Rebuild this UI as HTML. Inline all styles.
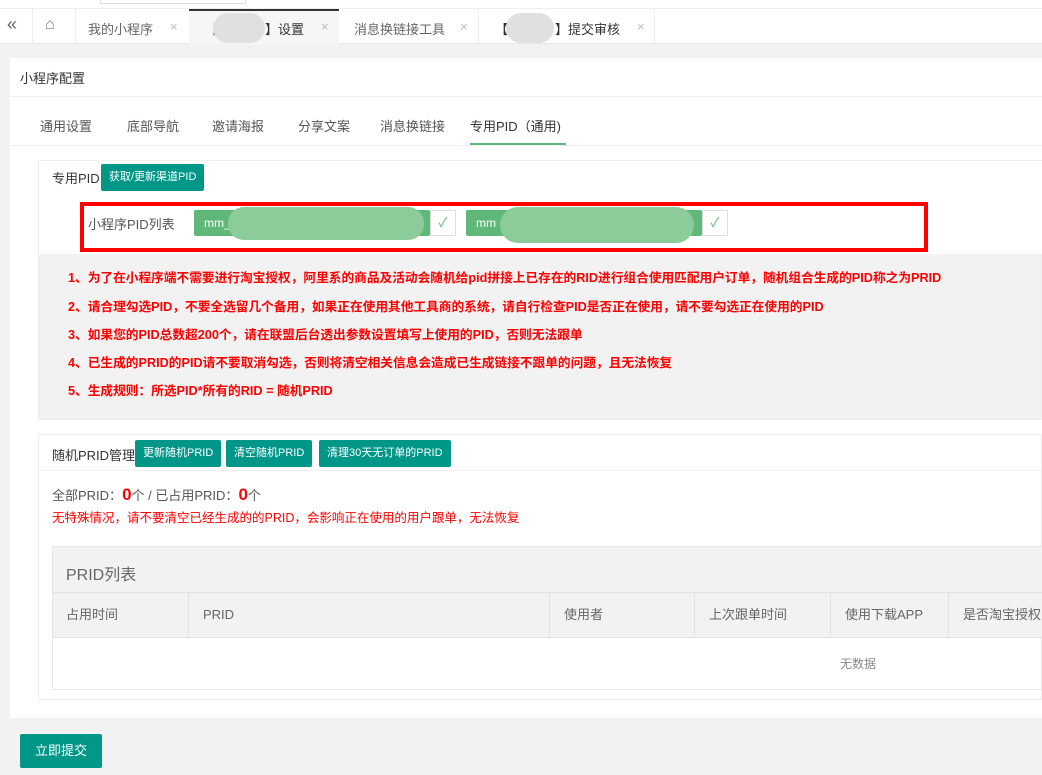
<!DOCTYPE html><html><head><meta charset="utf-8"><style>
*{box-sizing:border-box;margin:0;padding:0}
body{width:1042px;height:775px;overflow:hidden;background:#f2f2f2;font-family:"Liberation Sans","Noto Sans CJK SC",sans-serif;font-size:13px;color:#333;position:relative}
.a{position:absolute}
.btn{position:absolute;background:#009688;color:#fff;font-size:11px;height:26px;line-height:26px;padding:0 8px;border-radius:2px}
.red{color:#f00;font-weight:bold;font-size:12.7px;position:absolute;left:68px}
.th{position:absolute;top:592px;height:45px;line-height:45px;color:#666;padding-left:14px;border-left:1px solid #e2e2e2}
</style></head><body>
<div class="a" style="left:0;top:0;width:1042px;height:44px;background:#fff;border-bottom:1px solid #e6e6e6"></div>
<div class="a" style="left:100px;top:0;width:146px;height:4px;border:1px solid #ddd;border-top:none"></div>
<div class="a" style="left:0;top:8px;width:1042px;height:1px;background:#eee"></div>
<div class="a" style="left:7px;top:14px;font-size:18px;color:#666">«</div>
<div class="a" style="left:32px;top:9px;width:1px;height:35px;background:#eee"></div>
<div class="a" style="left:45px;top:16px;font-size:16px;color:#777">⌂</div>
<div class="a" style="left:75px;top:9px;width:1px;height:35px;background:#eee"></div>
<div class="a" style="left:88px;top:19px;color:#666">我的小程序</div><div class="a" style="left:170px;top:19px;color:#bbb">×</div>
<div class="a" style="left:189px;top:9px;width:150px;height:35px;background:#f6f6f6;border-top:2px solid #333"></div>
<div class="a" style="left:205px;top:19px;color:#333">【</div>
<div class="a" style="left:213px;top:13px;width:52px;height:30px;border-radius:15px;background:#e0e0e0"></div>
<div class="a" style="left:265px;top:19px;color:#333">】设置</div><div class="a" style="left:321px;top:19px;color:#bbb">×</div>
<div class="a" style="left:354px;top:19px;color:#666">消息换链接工具</div><div class="a" style="left:460px;top:19px;color:#bbb">×</div>
<div class="a" style="left:478px;top:9px;width:1px;height:35px;background:#eee"></div>
<div class="a" style="left:495px;top:19px;color:#333">【</div>
<div class="a" style="left:506px;top:13px;width:48px;height:30px;border-radius:15px;background:#e0e0e0"></div>
<div class="a" style="left:555px;top:19px;color:#333">】提交审核</div><div class="a" style="left:637px;top:19px;color:#bbb">×</div>
<div class="a" style="left:654px;top:9px;width:1px;height:35px;background:#eee"></div>

<div class="a" style="left:10px;top:58px;width:1032px;height:660px;background:#fff"></div>
<div class="a" style="left:20px;top:68px;color:#333">小程序配置</div>
<div class="a" style="left:10px;top:96px;width:1032px;height:1px;background:#f0f0f0"></div>
<div class="a" style="left:40px;top:116px;color:#555">通用设置</div>
<div class="a" style="left:127px;top:116px;color:#555">底部导航</div>
<div class="a" style="left:212px;top:116px;color:#555">邀请海报</div>
<div class="a" style="left:298px;top:116px;color:#555">分享文案</div>
<div class="a" style="left:380px;top:116px;color:#555">消息换链接</div>
<div class="a" style="left:470px;top:116px;color:#333">专用PID（通用)</div>
<div class="a" style="left:470px;top:143px;width:96px;height:2px;background:#5fb878"></div>
<div class="a" style="left:10px;top:145px;width:1032px;height:1px;background:#eee"></div>

<div class="a" style="left:38px;top:160px;width:1004px;height:260px;background:#f2f2f2;border:1px solid #eee"></div>
<div class="a" style="left:39px;top:161px;width:1003px;height:35px;background:#fff"></div>
<div class="a" style="left:52px;top:168px">专用PID</div>
<div class="btn" style="left:101px;top:164px;height:27px">获取/更新渠道PID</div>
<div class="a" style="left:39px;top:196px;width:1003px;height:58px;background:#fff"></div>
<div class="a" style="left:80px;top:202px;width:848px;height:50px;border:4px solid #f00"></div>
<div class="a" style="left:88px;top:214px;color:#555">小程序PID列表</div>
<div class="a" style="left:194px;top:210px;width:236px;height:26px;background:#5fb878;border-radius:2px;color:#fff;line-height:26px;padding-left:10px;font-size:12px">mm_</div>
<div class="a" style="left:228px;top:207px;width:196px;height:33px;border-radius:16px;background:#8ccb9a"></div>
<div class="a" style="left:430px;top:210px;width:26px;height:26px;border:1px solid #ddd;color:#5fb878;text-align:center;line-height:24px">✓</div>
<div class="a" style="left:466px;top:210px;width:236px;height:26px;background:#5fb878;border-radius:2px;color:#fff;line-height:26px;padding-left:10px;font-size:12px">mm</div>
<div class="a" style="left:500px;top:207px;width:194px;height:36px;border-radius:18px;background:#8ccb9a"></div>
<div class="a" style="left:702px;top:210px;width:26px;height:26px;border:1px solid #ddd;color:#5fb878;text-align:center;line-height:24px">✓</div>
<div class="red" style="top:267px">1、为了在小程序端不需要进行淘宝授权，阿里系的商品及活动会随机给pid拼接上已存在的RID进行组合使用匹配用户订单，随机组合生成的PID称之为PRID</div>
<div class="red" style="top:296px">2、请合理勾选PID，不要全选留几个备用，如果正在使用其他工具商的系统，请自行检查PID是否正在使用，请不要勾选正在使用的PID</div>
<div class="red" style="top:324px">3、如果您的PID总数超200个，请在联盟后台透出参数设置填写上使用的PID，否则无法跟单</div>
<div class="red" style="top:352px">4、已生成的PRID的PID请不要取消勾选，否则将清空相关信息会造成已生成链接不跟单的问题，且无法恢复</div>
<div class="red" style="top:380px">5、生成规则：所选PID*所有的RID = 随机PRID</div>

<div class="a" style="left:38px;top:434px;width:1004px;height:266px;background:#fff;border:1px solid #eee"></div>
<div class="a" style="left:39px;top:470px;width:1003px;height:1px;background:#f0f0f0"></div>
<div class="a" style="left:52px;top:445px">随机PRID管理</div>
<div class="btn" style="left:135px;top:440px;height:27px">更新随机PRID</div>
<div class="btn" style="left:226px;top:440px;height:27px">清空随机PRID</div>
<div class="btn" style="left:319px;top:440px;height:27px">清理30天无订单的PRID</div>
<div class="a" style="left:52px;top:485px;color:#555">全部PRID：<b style="color:#f00;font-size:17px">0</b>个 / 已占用PRID：<b style="color:#f00;font-size:17px">0</b>个</div>
<div class="a" style="left:52px;top:507px;color:#f00;font-size:12.5px">无特殊情况，请不要清空已经生成的的PRID，会影响正在使用的用户跟单，无法恢复</div>

<div class="a" style="left:52px;top:546px;width:990px;height:144px;border:1px solid #e6e6e6;background:#fff"></div>
<div class="a" style="left:53px;top:547px;width:989px;height:90px;background:#f2f2f2"></div>
<div class="a" style="left:66px;top:561px;font-size:16px;color:#666">PRID列表</div>
<div class="a" style="left:53px;top:592px;width:989px;height:1px;background:#e2e2e2"></div>
<div class="a" style="left:53px;top:637px;width:989px;height:1px;background:#e2e2e2"></div>
<div class="th" style="left:52px;border:none">占用时间</div>
<div class="th" style="left:188px">PRID</div>
<div class="th" style="left:549px">使用者</div>
<div class="th" style="left:694px">上次跟单时间</div>
<div class="th" style="left:830px">使用下载APP</div>
<div class="th" style="left:948px">是否淘宝授权</div>
<div class="a" style="left:840px;top:655px;color:#888;font-size:12px">无数据</div>

<div class="btn" style="left:20px;top:734px;width:82px;height:34px;line-height:34px;font-size:13px;text-align:center;padding:0">立即提交</div>
</body></html>
